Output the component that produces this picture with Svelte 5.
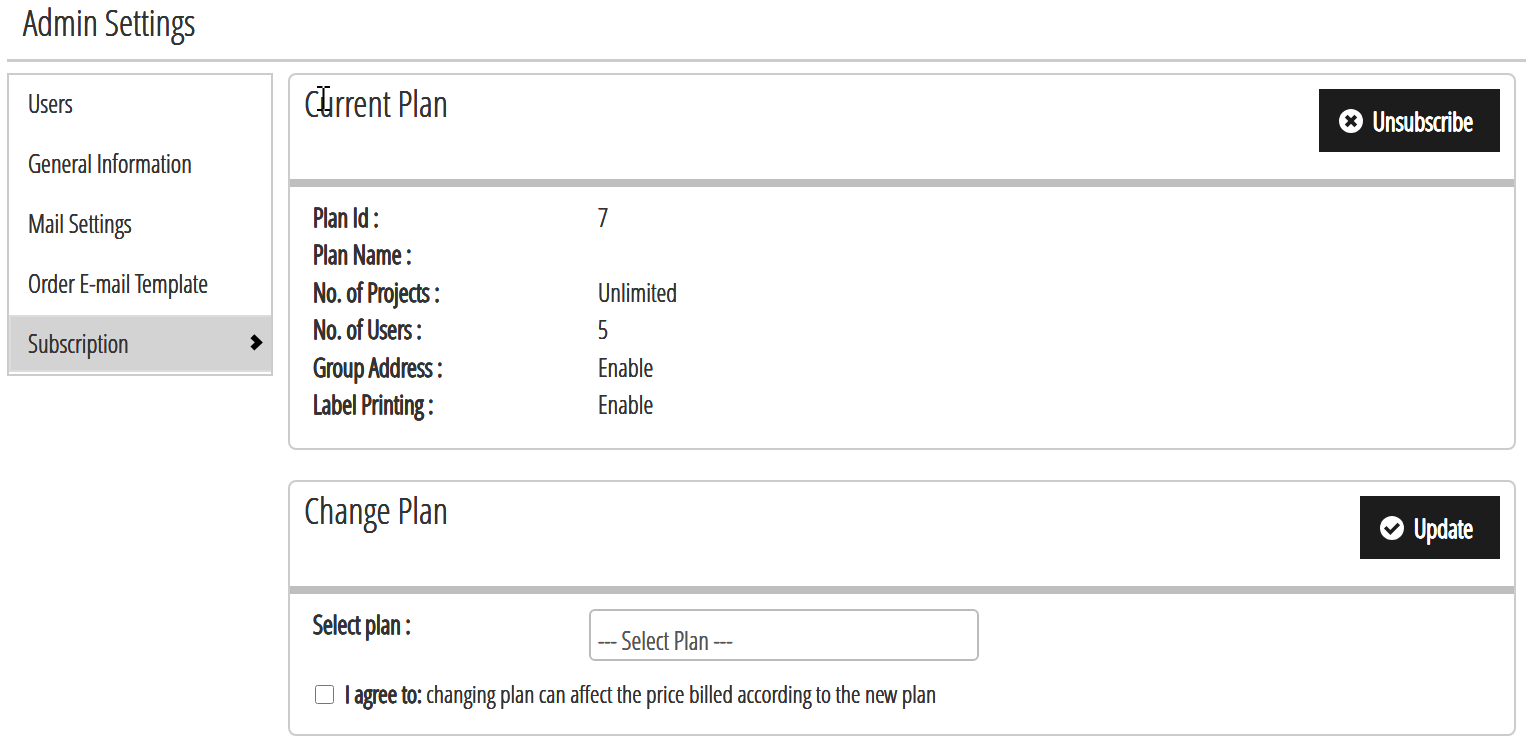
<script lang="ts">
	const menu = ['Users', 'General Information', 'Mail Settings', 'Order E-mail Template', 'Subscription']
	let active = $state('Subscription')

	const details = [
		{ label: 'Plan Id :', value: '7' },
		{ label: 'Plan Name :', value: '' },
		{ label: 'No. of Projects :', value: 'Unlimited' },
		{ label: 'No. of Users :', value: '5' },
		{ label: 'Group Address :', value: 'Enable' },
		{ label: 'Label Printing :', value: 'Enable' },
	]

	let plan = $state('')
	let agreed = $state(false)
</script>

<div class="page">
	<header class="page-header">
		<h1>Admin Settings</h1>
	</header>

	<div class="layout">
		<nav class="sidebar">
			{#each menu as item}
				<a href="#{item}" class:active={item === active} onclick={() => { active = item }}>
					<span>{item}</span>
					{#if item === active}
						<svg width="14" height="20" viewBox="0 0 14 20">
							<path d="M3.4 3.2 L9.8 9.4 L3.4 15.6" fill="none" stroke="#000" stroke-width="5.6" />
						</svg>
					{/if}
				</a>
			{/each}
		</nav>

		<main>
			<section class="card">
				<div class="card-header">
					<h2>
						Current Plan
						<svg class="caret" width="15" height="25" viewBox="0 0 15 25" aria-hidden="true">
							<path d="M1 1H6.5M8.5 1H14M1 24H6.5M8.5 24H14M7.5 2V23" fill="none" stroke="#000" stroke-width="2" />
						</svg>
					</h2>
					<button>
						<svg width="24" height="24" viewBox="0 0 24 24">
							<circle cx="12" cy="12" r="12" fill="#fff" />
							<path d="M7.2 7.2L16.8 16.8M16.8 7.2L7.2 16.8" stroke="#1c1c1c" stroke-width="4" />
						</svg>
						Unsubscribe
					</button>
				</div>
				<dl>
					{#each details as row}
						<dt>{row.label}</dt>
						<dd>{row.value}</dd>
					{/each}
				</dl>
			</section>

			<section class="card">
				<div class="card-header">
					<h2>Change Plan</h2>
					<button>
						<svg width="24" height="24" viewBox="0 0 24 24">
							<circle cx="12" cy="12" r="12" fill="#fff" />
							<path d="M5.2 11.2L10.4 16.4L18.8 8" fill="none" stroke="#1c1c1c" stroke-width="3.6" />
						</svg>
						Update
					</button>
				</div>
				<form>
					<div class="field">
						<label for="plan">Select plan :</label>
						<select id="plan" bind:value={plan}>
							<option value="">--- Select Plan ---</option>
						</select>
					</div>
					<label class="agree">
						<input type="checkbox" bind:checked={agreed} />
						<span><b>I agree to:</b> changing plan can affect the price billed according to the new plan</span>
					</label>
				</form>
			</section>
		</main>
	</div>
</div>

<style>
	.page {
		padding: 0 11px 18px 7px;
		font-family: "Open Sans Condensed Light", "Liberation Sans Narrow", "Arial Narrow", "Open Sans Condensed", sans-serif;
		font-size: 25px;
		line-height: 30px;
		color: #333;
		/* the light face is thin on its own */
		text-shadow: 0 0 0 currentColor, 0 0 0 currentColor, 0 0 0 currentColor;
	}

	.page-header {
		padding: 0 16px 14px;
		border-bottom: 3px solid #ccc;
	}

	h1, h2 {
		margin: 0;
		font-size: 36px;
		font-weight: normal;
		line-height: 45px;
	}

	.layout {
		display: grid;
		grid-template-columns: 266px 1fr;
		gap: 15px;
		align-items: start;
		padding: 11px 10px 0 0;
	}

	.sidebar {
		display: flex;
		flex-direction: column;
		gap: 3px;
		padding-bottom: 2px;
		border: 2px solid #ccc;
	}

	.sidebar a {
		display: flex;
		align-items: center;
		justify-content: space-between;
		height: 57px;
		padding: 0 8px 2px 19px;
		color: #333;
		text-decoration: none;
		box-sizing: border-box;
	}

	.sidebar a.active {
		background: #d3d3d3;
		border: 2px solid #dcdcdc;
		border-right: 0;
		padding-left: 17px;
	}

	main {
		display: grid;
		gap: 30px;
	}

	.card {
		border: 2px solid #ccc;
		border-radius: 8px;
	}

	.card-header {
		display: flex;
		justify-content: space-between;
		align-items: flex-start;
		min-height: 90px;
		padding: 14px 14px 0;
		border-bottom: 8px solid #bfbfbf;
	}

	h2 {
		position: relative;
		line-height: 30px;
	}

	/* text pointer resting over the heading */
	.caret {
		position: absolute;
		left: 12px;
		top: -3px;
	}

	button {
		display: flex;
		align-items: center;
		gap: 10px;
		height: 63px;
		padding: 0 27px 0 20px;
		border: 0;
		background: #1c1c1c;
		color: #fff;
		font: inherit;
		font-weight: bold;
		text-shadow: inherit;
	}

	dl {
		display: grid;
		grid-template-columns: 285px 1fr;
		grid-auto-rows: 1fr;
		align-items: center;
		min-height: 225px;
		margin: 0;
		padding: 11px 23px 25px;
	}

	dt, b, .field label {
		font-weight: bold;
	}

	dd {
		margin: 0;
	}

	form {
		padding: 15px 23px 25px;
	}

	.field {
		display: grid;
		grid-template-columns: 276px 390px;
		align-items: start;
	}

	select {
		appearance: none;
		height: 52px;
		padding: 10px 7px 0;
		border: 2px solid #bbb;
		border-radius: 6px;
		background: #fff;
		color: #555;
		font: inherit;
		text-shadow: inherit;
	}

	.agree {
		display: flex;
		align-items: center;
		gap: 11px;
		margin-top: 18px;
		font-size: 24px;
	}

	input {
		width: 19px;
		height: 19px;
		margin: 0 0 0 2px;
	}
</style>
